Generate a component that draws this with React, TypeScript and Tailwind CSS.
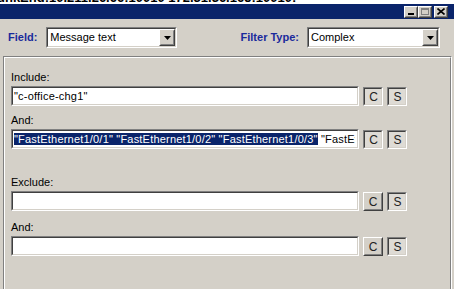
import React from "react";

const FONT = "font-['Liberation_Sans',Arial,sans-serif]";

function Sunken({ className = "", children }: { className?: string; children?: React.ReactNode }) {
  return (
    <div className={`border border-t-[#808080] border-l-[#808080] border-b-white border-r-white ${className}`}>
      <div className="h-full border border-t-[#404040] border-l-[#404040] border-b-[#d4d0c8] border-r-[#d4d0c8] bg-white overflow-hidden">
        {children}
      </div>
    </div>
  );
}

function Raised({ className = "", children }: { className?: string; children?: React.ReactNode }) {
  return (
    <div className={`border border-t-white border-l-white border-b-[#404040] border-r-[#404040] bg-[#d4d0c8] ${className}`}>
      <div className="h-full flex items-center justify-center border border-t-[#d4d0c8] border-l-[#d4d0c8] border-b-[#808080] border-r-[#808080]">
        {children}
      </div>
    </div>
  );
}

function Pressed({ children }: { children: React.ReactNode }) {
  return (
    <div className="w-[20px] h-[19px] border border-t-[#808080] border-l-[#808080] border-b-white border-r-white">
      <div className="h-full flex items-center justify-center border border-t-[#404040] border-l-[#404040] border-b-[#d4d0c8] border-r-[#d4d0c8] bg-[#dedbd5] text-[12px] text-[#222] pt-[1px] pl-[1px]">
        {children}
      </div>
    </div>
  );
}

function Combo({ value, width }: { value: string; width: string }) {
  return (
    <Sunken className={`${width} h-[21px]`}>
      <div className="flex h-full">
        <span className="flex-1 pl-[2px] text-[11px] leading-[17px] text-black">{value}</span>
        <Raised className="w-[16px] h-full">
          <svg width="7" height="4" viewBox="0 0 7 4"><path d="M0 0h7L3.5 4z" fill="#000" /></svg>
        </Raised>
      </div>
    </Sunken>
  );
}

function FilterRow({ label, children, pressedC, mt }: { label: string; children?: React.ReactNode; pressedC?: boolean; mt: string }) {
  return (
    <div className={mt}>
      <div className="text-[11px] leading-[13px] text-black">{label}</div>
      <div className="flex items-start mt-[2px]">
        <Sunken className="w-[348px] h-[20px]">
          <div className="w-[342px] overflow-hidden pl-[1px] text-[11px] leading-[16px] tracking-[0.2px] whitespace-nowrap text-black">
            {children}
          </div>
        </Sunken>
        <div className="ml-[4px] mt-[1px]">
          {pressedC ? (
            <Pressed>C</Pressed>
          ) : (
            <Raised className="w-[20px] h-[19px]">
              <span className="text-[12px] text-[#222]">C</span>
            </Raised>
          )}
        </div>
        <div className="ml-[4px] mt-[1px]">
          <Pressed>S</Pressed>
        </div>
      </div>
    </div>
  );
}

function TitleButton({ children }: { children: React.ReactNode }) {
  return <Raised className="w-[14px] h-[12px]">{children}</Raised>;
}

export default function App() {
  return (
    <div className={`w-[454px] h-[289px] overflow-hidden bg-[#d4d0c8] flex flex-col ${FONT}`}>
      <div className="h-[4px] bg-white overflow-hidden">
        <div className="-mt-[9px] -ml-[3px] text-[13px] leading-[13px] font-bold text-black whitespace-nowrap">
          unkEnd:10.211.26.66:10010 172.31.36.165:10010:
        </div>
      </div>
      <div className="h-[15px] bg-[#0a246a] flex items-center justify-end pr-[6px]">
        <TitleButton>
          <div className="w-[6px] h-[2px] bg-black mt-[5px] -ml-[1px]" />
        </TitleButton>
        <TitleButton>
          <div className="w-[8px] h-[7px] border border-[#808080] border-t-2" />
        </TitleButton>
        <div className="ml-[2px]">
          <TitleButton>
            <svg width="8" height="7" viewBox="0 0 8 7">
              <path d="M0.5 0.5l7 6M7.5 0.5l-7 6" stroke="#000" strokeWidth="1.6" />
            </svg>
          </TitleButton>
        </div>
      </div>
      <div className="flex items-center mt-[8px] h-[21px] pl-[8px] pr-[14px]">
        <span className="text-[11px] font-bold text-[#1a2a9c]">Field:</span>
        <div className="ml-[9px]">
          <Combo value="Message text" width="w-[131px]" />
        </div>
        <div className="flex-1" />
        <span className="text-[11px] font-bold text-[#1a2a9c]">Filter Type:</span>
        <div className="ml-[8px]">
          <Combo value="Complex" width="w-[133px]" />
        </div>
      </div>
      <div className="flex-1 mt-[8px] ml-[3px] mr-[2px] border-t border-l border-r border-t-[#808080] border-l-[#808080] border-r-white">
        <div className="h-full border-t border-l border-r border-t-white border-l-white border-r-[#808080] pl-[6px] pt-[13px]">
          <FilterRow label="Include:" mt="mt-0" pressedC>
            "c-office-chg1"
          </FilterRow>
          <FilterRow label="And:" mt="mt-[8px]" pressedC>
            <span className="bg-[#0a246a] text-white">
              "FastEthernet1/0/1" "FastEthernet1/0/2" "FastEthernet1/0/3"
            </span>{" "}
            "FastEt
          </FilterRow>
          <FilterRow label="Exclude:" mt="mt-[27px]" />
          <FilterRow label="And:" mt="mt-[10px]" />
        </div>
      </div>
    </div>
  );
}
